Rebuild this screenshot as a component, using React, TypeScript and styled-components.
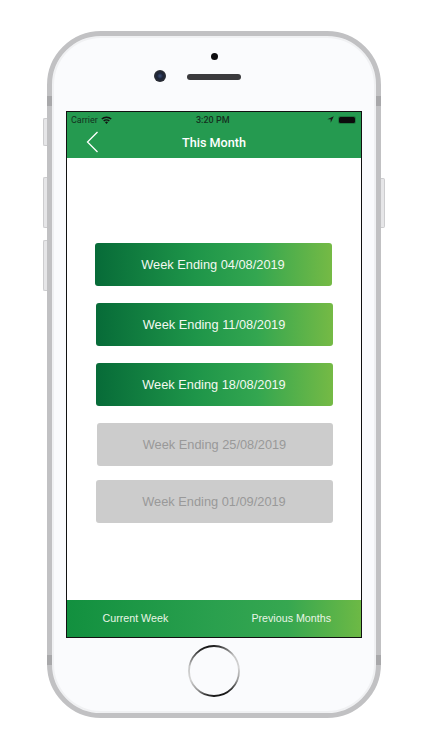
import React from 'react';
import styled, { createGlobalStyle } from 'styled-components';

const weeks = [
  { label: 'Week Ending 04/08/2019', active: true, top: 85, left: 27.5, width: 237 },
  { label: 'Week Ending 11/08/2019', active: true, top: 17, left: 28.5, width: 237 },
  { label: 'Week Ending 18/08/2019', active: true, top: 17, left: 28.5, width: 237 },
  { label: 'Week Ending 25/08/2019', active: false, top: 17, left: 29.5, width: 236 },
  { label: 'Week Ending 01/09/2019', active: false, top: 14, left: 28.5, width: 237 },
];

export default function App() {
  return (
    <>
      <GlobalStyle />
      <Page>
        <Phone>
          <SideKey $side="left" $top={82} $height={28} />
          <SideKey $side="left" $top={141} $height={51} />
          <SideKey $side="left" $top={204} $height={51} />
          <SideKey $side="right" $top={142} $height={50} />
          <Antenna $side="left" $top={60} />
          <Antenna $side="right" $top={60} />
          <Antenna $side="left" $top={619} />
          <Antenna $side="right" $top={619} />

          <TopBezel>
            <FrontDot />
            <SensorRow>
              <Camera />
              <Speaker />
            </SensorRow>
          </TopBezel>

          <Screen>
            <Header>
              <StatusBar>
                <Carrier>
                  Carrier
                  <svg width="11" height="8" viewBox="0 0 11 8">
                    <path d="M0.3 2.6a7.4 7.4 0 0 1 10.4 0l-1 1a6 6 0 0 0-8.4 0z" fill="#111" />
                    <path d="M2.2 4.5a4.7 4.7 0 0 1 6.6 0l-1 1a3.3 3.3 0 0 0-4.6 0z" fill="#111" />
                    <path d="M4 6.3a2.1 2.1 0 0 1 3 0L5.500 7.900z" fill="#111" />
                  </svg>
                </Carrier>
                <Clock>3:20 PM</Clock>
                <StatusIcons>
                  <svg width="7" height="7" viewBox="0 0 7 7">
                    <path d="M6.800 0.200L0.300 3.200H3.700V6.700z" fill="#1a1a1a" />
                  </svg>
                  <Battery />
                </StatusIcons>
              </StatusBar>
              <NavBar>
                <BackIcon width="13" height="22" viewBox="0 0 13 22">
                  <path d="M11.500 1L1.500 11l10 10" fill="none" stroke="#fff" strokeWidth="1.300" />
                </BackIcon>
                <Title>This Month</Title>
              </NavBar>
            </Header>

            <WeekList>
              {weeks.map((week) => (
                <WeekButton
                  key={week.label}
                  $active={week.active}
                  $top={week.top}
                  $left={week.left}
                  $width={week.width}
                >
                  {week.label}
                </WeekButton>
              ))}
            </WeekList>

            <Footer>
              <FooterLink>Current Week</FooterLink>
              <FooterLink>Previous Months</FooterLink>
            </Footer>
          </Screen>

          <BottomBezel>
            <svg width="52" height="52" viewBox="0 0 52 52">
              <defs>
                <linearGradient id="homeRing" x1="0.38" y1="0" x2="0.62" y2="1">
                  <stop offset="0" stopColor="#0c0c0c" />
                  <stop offset="0.1" stopColor="#555" />
                  <stop offset="0.3" stopColor="#c6c6c6" />
                  <stop offset="0.55" stopColor="#d4d4d4" />
                  <stop offset="0.78" stopColor="#999" />
                  <stop offset="0.92" stopColor="#333" />
                  <stop offset="1" stopColor="#0c0c0c" />
                </linearGradient>
              </defs>
              <circle cx="26" cy="26" r="25" fill="none" stroke="url(#homeRing)" strokeWidth="1.800" />
            </svg>
          </BottomBezel>
        </Phone>
      </Page>
    </>
  );
}

const GlobalStyle = createGlobalStyle`
  html, body {
    margin: 0;
    padding: 0;
    background: #fff;
    overflow: hidden;
  }
  * {
    box-sizing: border-box;
  }
`;

const Page = styled.div`
  width: 422px;
  height: 750px;
  padding: 31px 0 0 47px;
  background: #fff;
  font-family: 'Liberation Sans', Arial, sans-serif;
`;

const Phone = styled.div`
  position: relative;
  width: 334px;
  height: 687px;
  display: flex;
  flex-direction: column;
  align-items: center;
  background: #fafbfd;
  border: 5px solid #c1c1c3;
  border-radius: 54px;
  box-shadow: inset 0 0 0 2px #f0f1f3;
`;

const SideKey = styled.div<{ $side: 'left' | 'right'; $top: number; $height: number }>`
  position: absolute;
  top: ${(p) => p.$top}px;
  ${(p) => p.$side}: -9px;
  width: 4px;
  height: ${(p) => p.$height}px;
  background: #e6e6e8;
  border: 1px solid #cdcdcf;
  border-${(p) => (p.$side === 'left' ? 'right' : 'left')}: none;
  border-radius: ${(p) => (p.$side === 'left' ? '2px 0 0 2px' : '0 2px 2px 0')};
`;

const Antenna = styled.div<{ $side: 'left' | 'right'; $top: number }>`
  position: absolute;
  top: ${(p) => p.$top}px;
  ${(p) => p.$side}: -5px;
  width: 5px;
  height: 10px;
  background: #a8a8aa;
`;

const TopBezel = styled.div`
  width: 100%;
  height: 75px;
  display: flex;
  flex-direction: column;
  align-items: center;
  padding-top: 17px;
`;

const FrontDot = styled.div`
  width: 7px;
  height: 7px;
  border-radius: 50%;
  background: #0c0c0e;
`;

const SensorRow = styled.div`
  position: relative;
  margin-top: 14px;
`;

const Camera = styled.div`
  position: absolute;
  left: -33px;
  top: -4px;
  width: 12px;
  height: 12px;
  border-radius: 50%;
  background: radial-gradient(circle at 50% 50%, #3c4f7a 0, #1c2438 35%, #2b2d33 70%, #6a6c72 100%);
`;

const Speaker = styled.div`
  width: 54px;
  height: 6px;
  border-radius: 3px;
  background: #3a3a3d;
`;

const Screen = styled.div`
  width: 296px;
  height: 527px;
  flex-shrink: 0;
  display: flex;
  flex-direction: column;
  background: #fff;
  border: 1.500px solid #111;
`;

const Header = styled.header`
  height: 45.500px;
  flex-shrink: 0;
  background: #259a50;
`;

const StatusBar = styled.div`
  height: 14.500px;
  display: grid;
  grid-template-columns: 1fr auto 1fr;
  align-items: center;
  padding: 1px 6.500px 0 4px;
  font-family: Roboto, 'Liberation Sans', sans-serif;
  font-size: 9px;
  color: #14311f;
`;

const Carrier = styled.div`
  display: flex;
  align-items: center;
  gap: 3px;
`;

const Clock = styled.div`
  font-weight: 500;
`;

const StatusIcons = styled.div`
  display: flex;
  align-items: center;
  justify-content: flex-end;
  gap: 5px;
`;

const Battery = styled.div`
  width: 16px;
  height: 6px;
  border-radius: 1.500px;
  background: #0c0c0c;
  box-shadow: 0 0 0 1px #1c7a3f;
`;

const NavBar = styled.div`
  position: relative;
  height: 31px;
  display: flex;
  align-items: center;
  justify-content: center;
`;

const BackIcon = styled.svg`
  position: absolute;
  left: 18.500px;
  top: 4px;
`;

const Title = styled.div`
  font-family: Roboto, sans-serif;
  font-size: 12.600px;
  font-weight: 500;
  color: #fff;
  margin-top: 1px;
`;

const WeekList = styled.main`
  flex: 1;
  min-height: 0;
  display: flex;
  flex-direction: column;
`;

const WeekButton = styled.button<{ $active: boolean; $top: number; $left: number; $width: number }>`
  width: ${(p) => p.$width}px;
  height: 43px;
  flex-shrink: 0;
  margin: ${(p) => p.$top}px 0 0 ${(p) => p.$left}px;
  padding: 0;
  border: none;
  border-radius: 3px;
  font-family: 'Liberation Sans', Arial, sans-serif;
  font-size: 12.800px;
  color: ${(p) => (p.$active ? '#f2f8f1' : '#999999')};
  background: ${(p) =>
    p.$active ? 'linear-gradient(90deg, #076b38 0%, #1e9549 42%, #33a650 68%, #75ba45 100%)' : '#cccccc'};
`;

const Footer = styled.footer`
  height: 37.500px;
  flex-shrink: 0;
  display: flex;
  align-items: center;
  justify-content: space-between;
  padding: 0 30px 0 35.500px;
  background: linear-gradient(90deg, #12903f 0%, #2aa04e 50%, #36a750 75%, #6db945 100%);
`;

const FooterLink = styled.div`
  font-size: 10.700px;
  color: #e9f5e6;
`;

const BottomBezel = styled.div`
  flex: 1;
  width: 100%;
  display: flex;
  justify-content: center;
  padding-top: 7px;
`;
